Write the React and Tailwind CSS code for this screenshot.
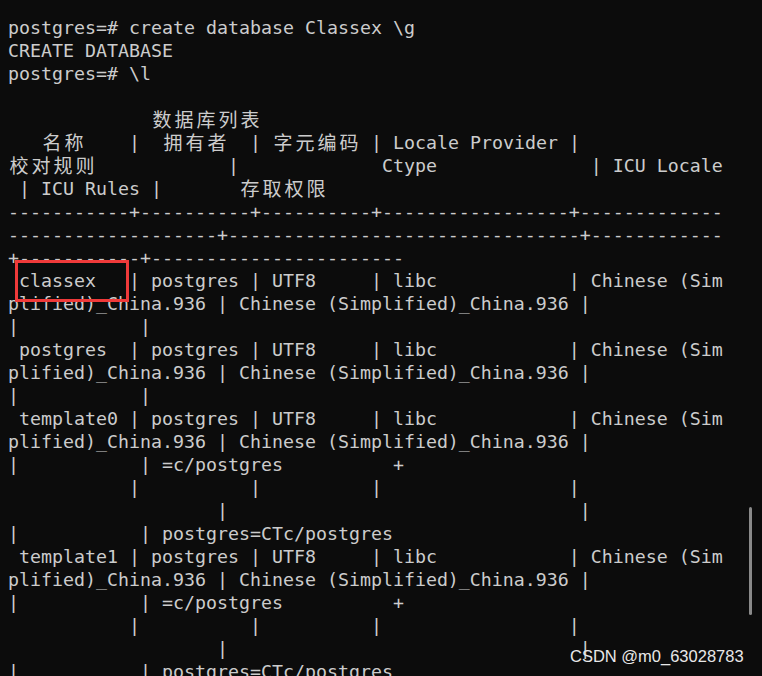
const lines = [
  'postgres=# create database Classex \\g',
  'CREATE DATABASE',
  'postgres=# \\l',
  '',
  '             数据库列表',
  '   名称    |  拥有者  | 字元编码 | Locale Provider |',
  '校对规则            |             Ctype              | ICU Locale',
  ' | ICU Rules |       存取权限',
  '-----------+----------+----------+-----------------+-------------',
  '-------------------+--------------------------------+------------',
  '+-----------+-----------------------',
  ' classex   | postgres | UTF8     | libc            | Chinese (Sim',
  'plified)_China.936 | Chinese (Simplified)_China.936 |',
  '|           |',
  ' postgres  | postgres | UTF8     | libc            | Chinese (Sim',
  'plified)_China.936 | Chinese (Simplified)_China.936 |',
  '|           |',
  ' template0 | postgres | UTF8     | libc            | Chinese (Sim',
  'plified)_China.936 | Chinese (Simplified)_China.936 |',
  '|           | =c/postgres          +',
  '           |          |          |                 |',
  '                   |                                |',
  '|           | postgres=CTc/postgres',
  ' template1 | postgres | UTF8     | libc            | Chinese (Sim',
  'plified)_China.936 | Chinese (Simplified)_China.936 |',
  '|           | =c/postgres          +',
  '           |          |          |                 |',
  '                   |                                |',
  '|           | postgres=CTc/postgres',
]

const isWide = (ch) => ch.charCodeAt(0) > 0x2e80

// terminal cells: ascii = 11px, CJK = 22px
const TermLine = ({ text }) => {
  const parts = []
  let buf = ''
  for (const ch of text) {
    if (isWide(ch)) {
      if (buf) parts.push(buf)
      buf = ''
      parts.push({ wide: ch })
    } else {
      buf += ch
    }
  }
  if (buf) parts.push(buf)

  return (
    <div className="h-[23px] leading-[23px] whitespace-pre">
      {parts.map((p, i) =>
        typeof p === 'string' ? (
          <span key={i}>{p}</span>
        ) : (
          <span
            key={i}
            className="inline-block align-top w-[22px] h-[23px] leading-[21px] text-center text-[19px] font-['Noto_Sans_CJK_SC',sans-serif]"
          >
            {p.wide}
          </span>
        )
      )}
      {text === '' && ' '}
    </div>
  )
}

export default function App() {
  return (
    <div className="relative w-[762px] h-[676px] overflow-hidden bg-[#0c0c0c]">
      <div className="pt-4 pl-2 text-[18.27px] text-[#cccccc] font-['DejaVu_Sans_Mono','Liberation_Mono',monospace]">
        {lines.map((l, i) => (
          <TermLine key={i} text={l} />
        ))}
      </div>

      {/* highlight box */}
      <div className="absolute left-[15px] top-[260px] w-[114px] h-[42px] border-[3px] border-[#ef3a3a]" />

      {/* scrollbar thumb */}
      <div className="absolute left-[749px] top-[507px] w-[3px] h-[108px] rounded-full bg-[#8a8a8a]" />

      {/* watermark */}
      <div className="absolute left-[570px] top-[646px] text-[16.5px] leading-5 text-[#e8e8e8] font-['Liberation_Sans',Arial,sans-serif]">
        CSDN @m0_63028783
      </div>
    </div>
  )
}
